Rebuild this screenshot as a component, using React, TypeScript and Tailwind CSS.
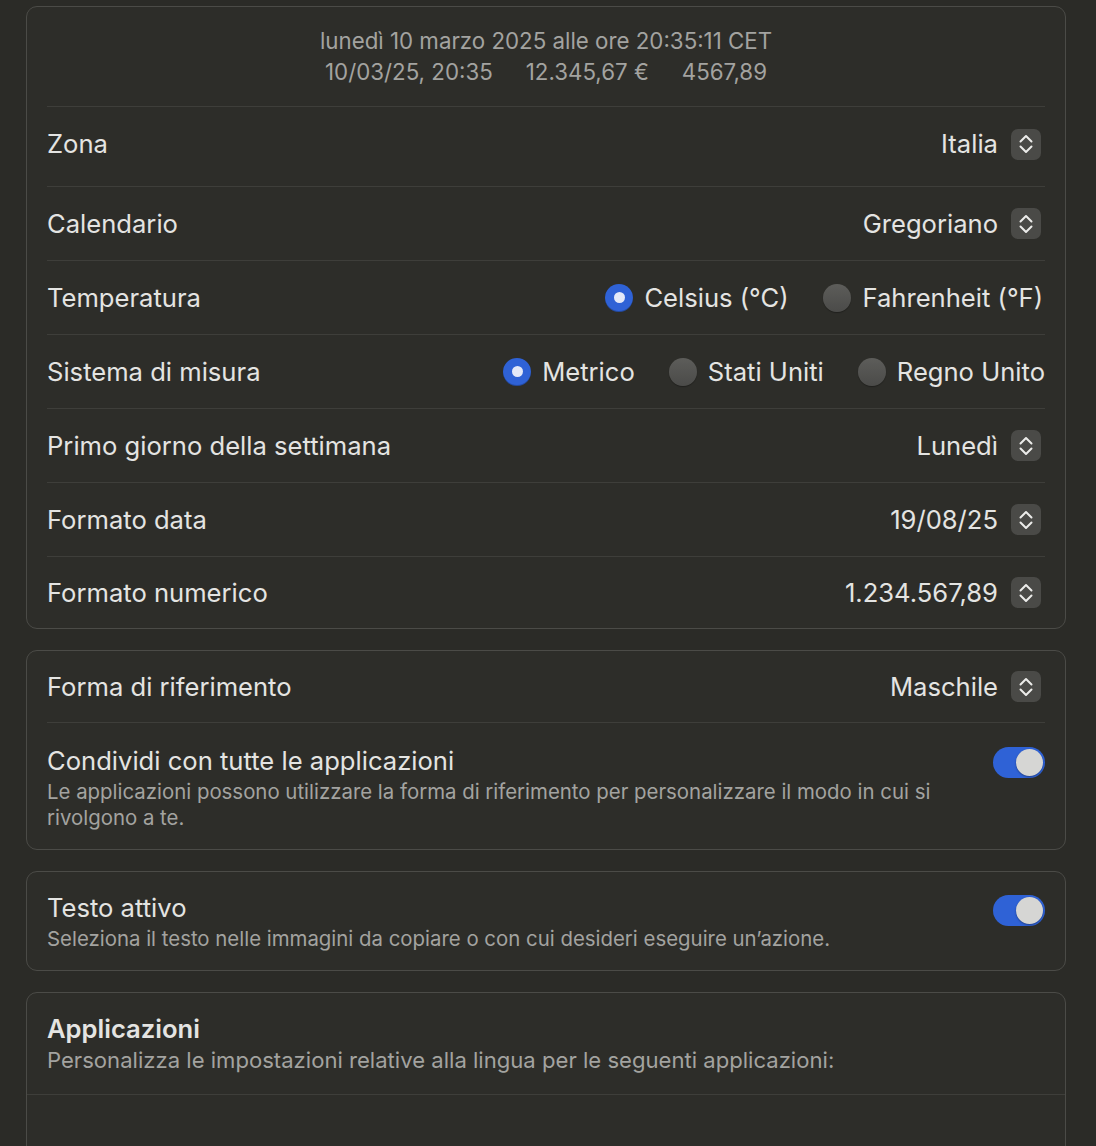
import type { ReactNode } from 'react';

const font = { fontFamily: 'Inter, "Noto Sans", "Liberation Sans", sans-serif' };

// ── Controls ──────────────────────────────────────────────────────────────────
function Stepper() {
  return (
    <span className="ml-[13px] mr-[4px] flex h-[31px] w-[30px] items-center justify-center rounded-[7px] bg-[#4a4a47]">
      <svg width="14" height="20" viewBox="0 0 14 20" fill="none">
        <path d="M1.5 7.5 L7 2 L12.5 7.5" stroke="#ececea" strokeWidth="2" strokeLinecap="round" strokeLinejoin="round" />
        <path d="M1.5 12.5 L7 18 L12.5 12.5" stroke="#ececea" strokeWidth="2" strokeLinecap="round" strokeLinejoin="round" />
      </svg>
    </span>
  );
}

function Radio({ label, checked }: { label: string; checked?: boolean }) {
  return (
    <span className="flex items-center gap-[11px]">
      {checked ? (
        <span className="flex h-[28px] w-[28px] items-center justify-center rounded-full bg-[#2f62d6] shadow-[inset_0_-1px_0_rgba(0,0,0,0.25)]">
          <span className="h-[11px] w-[11px] rounded-full bg-[#e4e9f8]" />
        </span>
      ) : (
        <span className="h-[28px] w-[28px] rounded-full bg-gradient-to-b from-[#5d5d5a] to-[#4b4b49] shadow-[0_1px_1px_rgba(0,0,0,0.3)]" />
      )}
      <span>{label}</span>
    </span>
  );
}

function Toggle() {
  return (
    <span className="flex h-[31px] w-[52px] shrink-0 items-center justify-end rounded-full bg-[#2f62d6] pr-[2px]">
      <span className="h-[27px] w-[27px] rounded-full bg-[#d6d6d4] shadow-[0_1px_2px_rgba(0,0,0,0.35)]" />
    </span>
  );
}

function Divider() {
  return <div className="mx-[20px] h-px bg-[#3e3e3a]" />;
}

function Row({ label, h, children }: { label: string; h: string; children: ReactNode }) {
  return (
    <div className={`flex items-center justify-between px-[20px] ${h}`}>
      <span>{label}</span>
      <div className="flex items-center">{children}</div>
    </div>
  );
}

function Card({ children }: { children: ReactNode }) {
  return (
    <section className="overflow-hidden rounded-[11px] border border-[#4b4b47] bg-[#2d2d29]">
      {children}
    </section>
  );
}

// ── Page ──────────────────────────────────────────────────────────────────────
export default function App() {
  return (
    <div
      style={font}
      className="min-h-[1146px] bg-[#2b2b27] pl-[26px] pr-[30px] pt-[6px] text-[25.6px] leading-[30px] text-[#e4e4e2]"
    >
      <div className="flex flex-col gap-[21px]">
        {/* Formati */}
        <Card>
          <div className="pt-[18px] pb-[19px] text-center text-[22.3px] leading-[31px] text-[#a3a3a0]">
            <div>lunedì 10 marzo 2025 alle ore 20:35:11 CET</div>
            <div className="flex justify-center gap-[33px]">
              <span>10/03/25, 20:35</span>
              <span>12.345,67 €</span>
              <span>4567,89</span>
            </div>
          </div>
          <Divider />
          <Row label="Zona" h="h-[79px] pb-[5px]">
            <span>Italia</span>
            <Stepper />
          </Row>
          <Divider />
          <Row label="Calendario" h="h-[73px]">
            <span>Gregoriano</span>
            <Stepper />
          </Row>
          <Divider />
          <Row label="Temperatura" h="h-[73px]">
            <div className="flex items-center gap-[35px] pr-[2px]">
              <Radio label="Celsius (°C)" checked />
              <Radio label="Fahrenheit (°F)" />
            </div>
          </Row>
          <Divider />
          <Row label="Sistema di misura" h="h-[73px]">
            <div className="flex items-center gap-[34px]">
              <Radio label="Metrico" checked />
              <Radio label="Stati Uniti" />
              <Radio label="Regno Unito" />
            </div>
          </Row>
          <Divider />
          <Row label="Primo giorno della settimana" h="h-[73px]">
            <span>Lunedì</span>
            <Stepper />
          </Row>
          <Divider />
          <Row label="Formato data" h="h-[73px]">
            <span>19/08/25</span>
            <Stepper />
          </Row>
          <Divider />
          <Row label="Formato numerico" h="h-[71px]">
            <span>1.234.567,89</span>
            <Stepper />
          </Row>
        </Card>

        {/* Forma di riferimento */}
        <Card>
          <Row label="Forma di riferimento" h="h-[71px]">
            <span>Maschile</span>
            <Stepper />
          </Row>
          <Divider />
          <div className="flex items-start justify-between gap-[40px] px-[20px] pt-[23px] pb-[18px]">
            <div>
              <div>Condividi con tutte le applicazioni</div>
              <p className="mt-[3px] text-[20.4px] leading-[26px] text-[#a3a3a0]">
                Le applicazioni possono utilizzare la forma di riferimento per personalizzare il modo in cui si
                rivolgono a te.
              </p>
            </div>
            <div className="pt-[1px]">
              <Toggle />
            </div>
          </div>
        </Card>

        {/* Testo attivo */}
        <Card>
          <div className="flex items-start justify-between px-[20px] pt-[21px] pb-[18px]">
            <div>
              <div>Testo attivo</div>
              <p className="mt-[3px] text-[20.4px] leading-[26px] text-[#a3a3a0]">
                Seleziona il testo nelle immagini da copiare o con cui desideri eseguire un’azione.
              </p>
            </div>
            <div className="pt-[2px]">
              <Toggle />
            </div>
          </div>
        </Card>

        {/* Applicazioni */}
        <Card>
          <div className="px-[20px] pt-[21px] pb-[21px]">
            <div className="font-semibold">Applicazioni</div>
            <p className="mt-[3px] text-[22.1px] leading-[26px] text-[#a3a3a0]">
              Personalizza le impostazioni relative alla lingua per le seguenti applicazioni:
            </p>
          </div>
          <div className="h-px bg-[#3e3e3a]" />
          <div className="h-[80px]" />
        </Card>
      </div>
    </div>
  );
}
